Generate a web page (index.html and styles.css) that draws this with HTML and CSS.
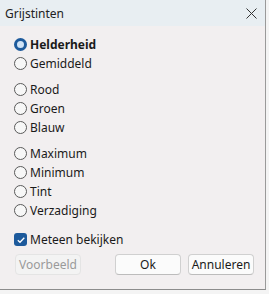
FILE: index.html
```html
<!DOCTYPE html>
<html>
<head>
<meta charset="utf-8">
<link rel="stylesheet" href="styles.css">
</head>
<body>
<div class="window">
  <div class="titlebar">
    <span class="title">Grijstinten</span>
    <svg class="close" width="11" height="11" viewBox="0 0 11 11"><path d="M0.5 0.5L10.5 10.5M10.5 0.5L0.5 10.5" stroke="#333" stroke-width="1"/></svg>
  </div>
  <div class="content">
    <div class="group">
      <label class="opt"><span class="radio on"></span><b>Helderheid</b></label>
      <label class="opt"><span class="radio"></span>Gemiddeld</label>
    </div>
    <div class="group">
      <label class="opt"><span class="radio"></span>Rood</label>
      <label class="opt"><span class="radio"></span>Groen</label>
      <label class="opt"><span class="radio"></span>Blauw</label>
    </div>
    <div class="group">
      <label class="opt"><span class="radio"></span>Maximum</label>
      <label class="opt"><span class="radio"></span>Minimum</label>
      <label class="opt"><span class="radio"></span>Tint</label>
      <label class="opt"><span class="radio"></span>Verzadiging</label>
    </div>
    <div class="group last">
      <label class="opt"><span class="check"><svg width="10" height="10" viewBox="0 0 10 10"><path d="M1.8 5.2L4 7.3L8.3 2.8" fill="none" stroke="#fff" stroke-width="1.3"/></svg></span>Meteen bekijken</label>
    </div>
    <div class="buttons">
      <button class="btn disabled">Voorbeeld</button>
      <span class="spacer"></span>
      <button class="btn">Ok</button>
      <button class="btn">Annuleren</button>
    </div>
  </div>
</div>
</body>
</html>
```
FILE: styles.css
```css
html, body { margin: 0; padding: 0; background: #f4f4f4; }
body { font-family: "Noto Sans", "Open Sans", sans-serif; font-size: 12px; color: #1a1a1a; }
.window {
  width: 266px; height: 290px; box-sizing: border-box;
  background: #f2eff0;
  border-right: 1px solid #9a9a9a; border-bottom: 1px solid #8c8c8c;
  display: flex; flex-direction: column;
}
.titlebar {
  height: 26px; background: #e8eef2;
  display: flex; align-items: center; justify-content: space-between;
  padding: 0 8px 0 5px;
}
.title { font-size: 12px; color: #222; }
.content { padding: 9px 11px 0 15px; display: flex; flex-direction: column; }
.group { display: flex; flex-direction: column; margin-bottom: 7px; }
.group.last { margin-top: 3px; margin-bottom: 5px; }
.opt { display: flex; align-items: center; height: 19px; gap: 3px; margin-left: -1px; }
.opt b { font-weight: 700; }
.radio {
  width: 11px; height: 11px; border-radius: 50%;
  border: 1px solid #5a5a5a; background: #f7f7f7; box-sizing: content-box;
}
.radio.on {
  width: 7px; height: 7px; border: 3px solid #1d5a9c; background: #cfe3f7;
}
.check {
  width: 13px; height: 13px; border-radius: 3px; background: #1d5a9c;
  display: flex; align-items: center; justify-content: center;
}
.buttons { display: flex; gap: 7px; }
.spacer { flex: 1; }
.btn {
  width: 66px; height: 21px; font-family: inherit; font-size: 12px;
  border: 1px solid #d0d0d0; border-bottom-color: #bcbcbc; border-radius: 4px;
  background: #fbfbfb; color: #1a1a1a; padding: 0;
}
.btn.disabled { color: #9a9a9a; background: #f3f3f3; border-color: #e4e4e4; }
```
